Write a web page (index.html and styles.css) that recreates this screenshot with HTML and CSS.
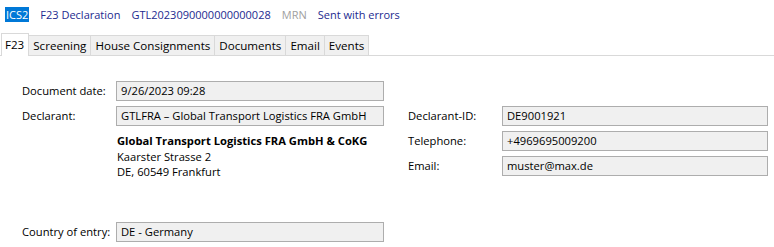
FILE: index.html
```html
<!DOCTYPE html>
<html>
<head>
<meta charset="utf-8">
<link rel="stylesheet" href="styles.css">
</head>
<body>
<div class="header">
  <span class="hl">ICS2</span>
  <span class="hitem">F23 Declaration</span>
  <span class="hitem">GTL2023090000000000028</span>
  <span class="hitem muted">MRN</span>
  <span class="hitem">Sent with errors</span>
</div>
<div class="tabs">
  <div class="tab active">F23</div>
  <div class="tab">Screening</div>
  <div class="tab">House Consignments</div>
  <div class="tab">Documents</div>
  <div class="tab">Email</div>
  <div class="tab">Events</div>
</div>
<div class="form">
  <div class="label r1">Document date:</div>
  <div class="field c2 r1">9/26/2023 09:28</div>

  <div class="label r2">Declarant:</div>
  <div class="field c2 r2">GTLFRA – Global Transport Logistics FRA GmbH</div>
  <div class="label c4 r2">Declarant-ID:</div>
  <div class="field c5 r2">DE9001921</div>

  <div class="address c2">
    <div class="bold">Global Transport Logistics FRA GmbH &amp; CoKG</div>
    <div>Kaarster Strasse 2</div>
    <div>DE, 60549 Frankfurt</div>
  </div>
  <div class="label c4 r3">Telephone:</div>
  <div class="field c5 r3">+4969695009200</div>
  <div class="label c4 r4">Email:</div>
  <div class="field c5 r4">muster@max.de</div>

  <div class="label r6">Country of entry:</div>
  <div class="field c2 r6">DE - Germany</div>
</div>
</body>
</html>
```

FILE: styles.css
```css
html, body {
  margin: 0;
  padding: 0;
  background: #ffffff;
  font-family: "Open Sans", "Noto Sans", sans-serif;
  font-size: 11.2px;
  color: #000000;
}

.header {
  display: flex;
  align-items: center;
  gap: 11px;
  padding: 7px 0 0 5px;
  height: 15px;
  line-height: 15px;
  color: #1c2a8f;
  font-size: 11px;
}

.hl {
  background: #0078d7;
  color: #ffffff;
  padding: 0 1px;
}

.muted {
  color: #a0a0a0;
}

.tabs {
  display: flex;
  align-items: flex-end;
  margin-top: 11px;
  height: 22px;
  border-bottom: 1px solid #d9d9d9;
  padding-left: 1px;
}

.tab {
  height: 19px;
  line-height: 19px;
  padding: 0 4px;
  background: #f0f0f0;
  border: 1px solid #d9d9d9;
  border-bottom: none;
  border-left: none;
  font-size: 11.6px;
}

.tab.active {
  background: #ffffff;
  height: 22px;
  line-height: 21px;
  border-left: 1px solid #d9d9d9;
  margin-bottom: -1px;
  padding: 0 4px 0 3px;
}

.form {
  display: grid;
  grid-template-columns: 94px 268px 24px 94px 266px;
  grid-template-rows: 20px 20px 20px 20px 36px 20px;
  row-gap: 5px;
  padding: 25px 0 0 22px;
}

.label {
  grid-column: 1;
  line-height: 20px;
  white-space: nowrap;
}

.field {
  box-sizing: border-box;
  height: 20px;
  line-height: 18px;
  padding: 0 4px;
  background: #f0f0f0;
  border: 1px solid #adadad;
  white-space: nowrap;
  overflow: hidden;
}

.c2 { grid-column: 2; }
.c4 { grid-column: 4; }
.c5 { grid-column: 5; }
.r1 { grid-row: 1; }
.r2 { grid-row: 2; }
.r3 { grid-row: 3; }
.r4 { grid-row: 4; }
.r6 { grid-row: 6; }

.address {
  grid-row: 3 / span 3;
  padding: 2px 0 0 1px;
  line-height: 15.5px;
}

.bold {
  font-weight: 700;
}
```
